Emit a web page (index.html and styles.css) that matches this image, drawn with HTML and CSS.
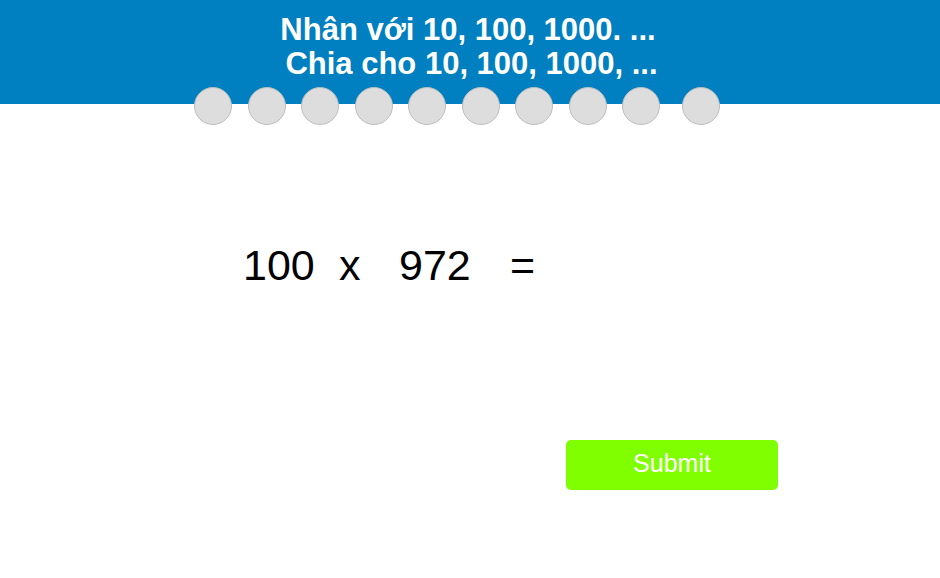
FILE: index.html
```html
<!DOCTYPE html>
<html lang="vi">
<head>
<meta charset="utf-8">
<title>Nhân với 10, 100, 1000</title>
<link rel="stylesheet" href="styles.css">
</head>
<body>
<header class="banner">
  <h1 class="title"><span class="line">Nhân với 10, 100, 1000. ...</span><span class="line line-2">Chia cho 10, 100, 1000, ...</span></h1>
</header>
<div class="dots">
  <span class="dot"></span><span class="dot"></span><span class="dot"></span><span class="dot"></span><span class="dot"></span><span class="dot"></span><span class="dot"></span><span class="dot"></span><span class="dot"></span><span class="dot dot-last"></span>
</div>
<main class="question">
  <div class="equation">
    <span class="term t1">100</span>
    <span class="term t2">x</span>
    <span class="term t3">972</span>
    <span class="term t4">=</span>
  </div>
  <div class="actions">
    <button class="submit" type="button">Submit</button>
  </div>
</main>
</body>
</html>
```

FILE: styles.css
```css
html, body {
  margin: 0;
  padding: 0;
  background: #ffffff;
  font-family: "Liberation Sans", Arial, sans-serif;
}

.banner {
  background: #0080c0;
  height: 104px;
  box-sizing: border-box;
  padding-top: 13px;
}

.title {
  margin: 0;
  color: #ffffff;
  font-size: 31px;
  font-weight: bold;
  line-height: 34px;
  text-align: center;
}

.line {
  display: block;
  padding-right: 4px;
}

.line-2 {
  padding-right: 0;
  padding-left: 3px;
}

.dots {
  display: flex;
  margin-top: -17px;
  padding-left: 194px;
  height: 38px;
}

.dot {
  width: 38px;
  height: 38px;
  box-sizing: border-box;
  border-radius: 50%;
  background: #dddddd;
  border: 1px solid #bdbdbd;
  margin-right: 15.5px;
  flex: none;
}

.dot-last {
  margin-left: 6.5px;
}

.equation {
  display: flex;
  margin-top: 119px;
  padding-left: 243px;
  font-size: 43px;
  line-height: 43px;
  color: #000000;
}

.term { display: block; }
.t1 { width: 96px; }
.t2 { width: 60px; }
.t3 { width: 111px; }

.actions {
  display: flex;
  margin-top: 153px;
  padding-left: 566px;
}

.submit {
  width: 212px;
  height: 50px;
  background: #80ff00;
  border: none;
  border-radius: 5px;
  color: #ffffff;
  font-family: "Liberation Sans", Arial, sans-serif;
  font-size: 25px;
  padding: 0 0 4px 0;
  cursor: pointer;
}
```
